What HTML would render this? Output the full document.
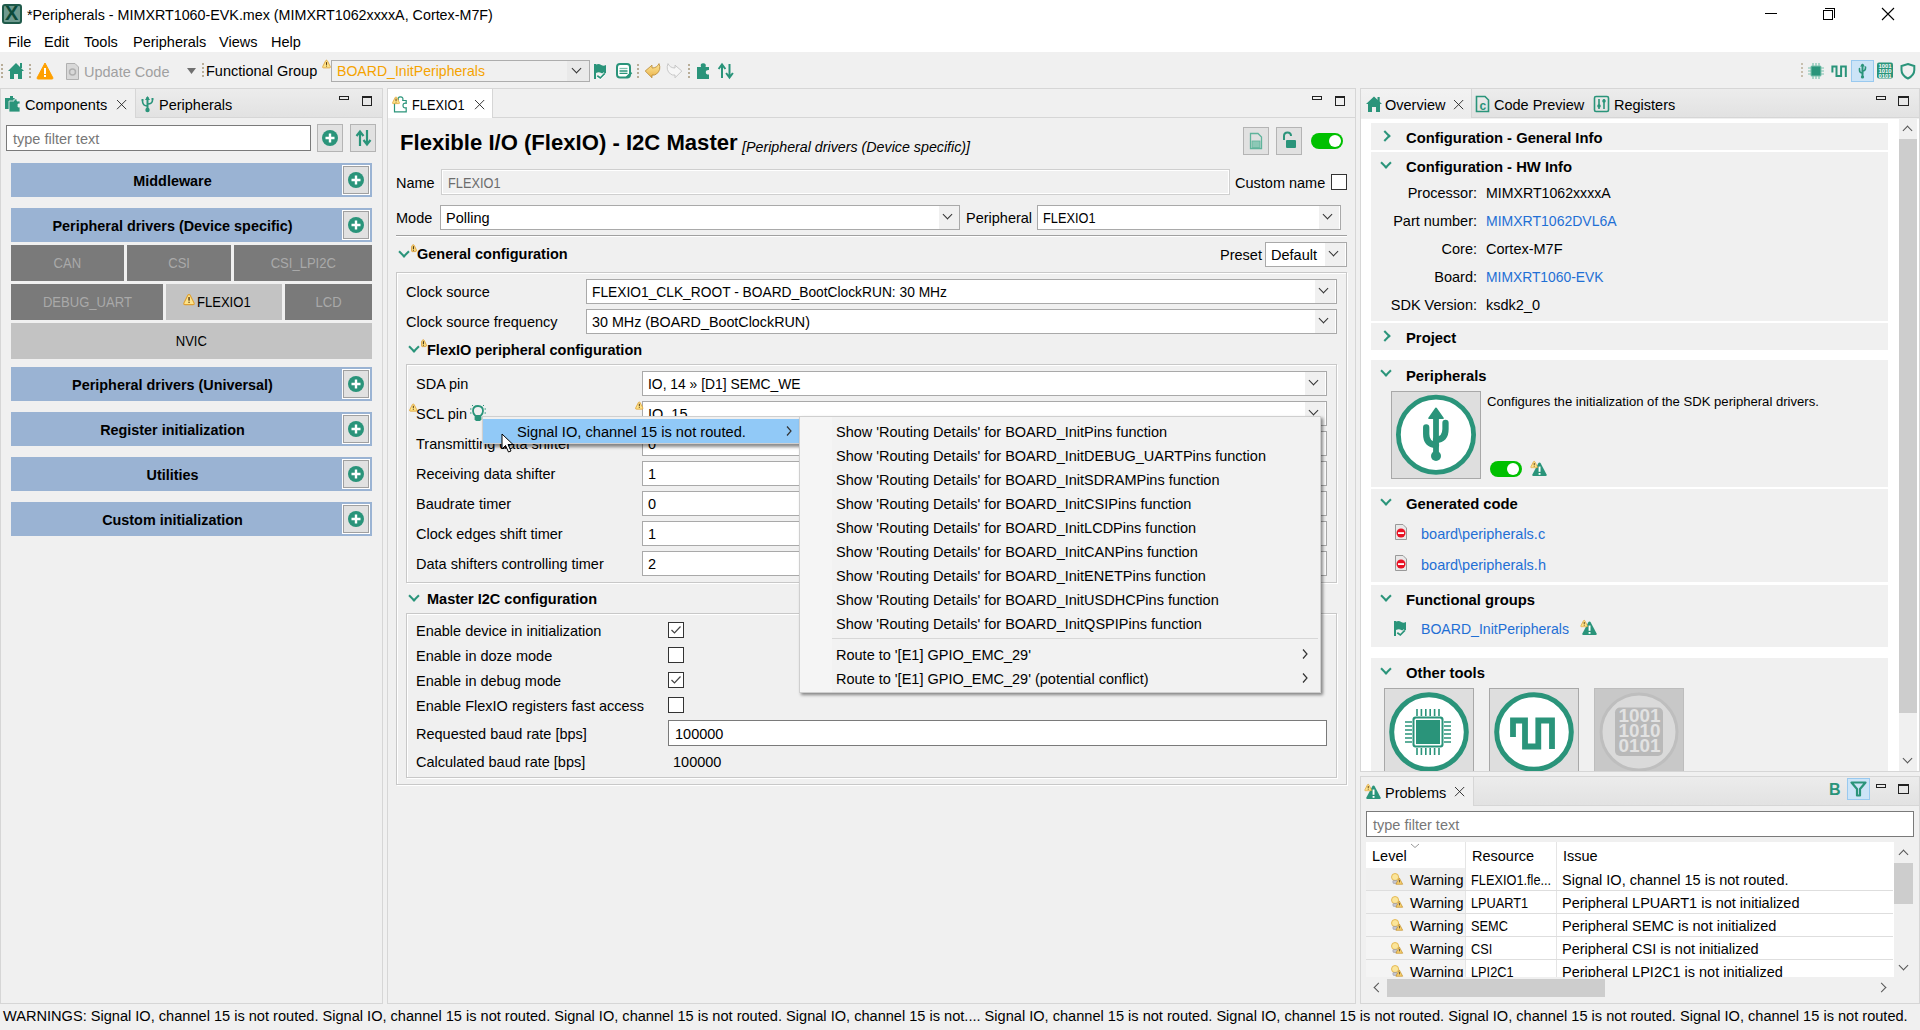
<!DOCTYPE html>
<html><head><meta charset="utf-8">
<style>
*{margin:0;padding:0;box-sizing:border-box}
html,body{width:1920px;height:1030px;overflow:hidden;background:#f0f0f0;font-family:"Liberation Sans",sans-serif;color:#000}
.a{position:absolute}
.t{position:absolute;white-space:nowrap;font-size:14.5px;line-height:15px}
.b{font-weight:bold}
.cx{transform:scaleX(.88);transform-origin:0 50%}
.tile span{display:inline-block;transform:scaleX(.9)}
.box{position:absolute;border:1px solid #a0a0a0;background:#fff}
.grp{position:absolute;border:1px solid #c8c8c8;box-shadow:inset 1px 1px 0 #fff,1px 1px 0 #fff}
.bar{position:absolute;background:#9ab3d3}
.plus{position:absolute;width:29px;height:30px;border:1px solid #a8a8a8;box-shadow:inset 0 0 0 1px #fff, 0 0 0 1px #fff;background:#e1e1e1}
.plus:after{content:"";position:absolute;left:5px;top:6px;width:17px;height:17px;border-radius:50%;background:#2a947a}
.plus i{position:absolute;z-index:2;background:#fff}
.tile{position:absolute;background:#7a7a7a;color:#a9a9a9;font-size:14.5px;text-align:center;line-height:36px;white-space:nowrap}
.tile.on{background:#c3c3c3;color:#000}
.cb{position:absolute;width:16px;height:16px;border:1px solid #333;background:#fff}
.dd{position:absolute;width:20px;background:#f0f0f0}
.chev{position:absolute;width:8px;height:8px;border-right:2px solid #444;border-bottom:2px solid #444;transform:rotate(45deg)}
.gchev{position:absolute;width:8px;height:8px;border-right:2.5px solid #2a947a;border-bottom:2.5px solid #2a947a;transform:rotate(45deg)}
.rchev{position:absolute;width:8px;height:8px;border-right:2.5px solid #2a947a;border-bottom:2.5px solid #2a947a;transform:rotate(-45deg)}
.lnk{color:#1f6fd5}
.sec{position:absolute;left:1371px;width:517px;background:#f0f0f0}
</style></head><body>

<!-- title bar -->
<div class="a" style="left:0;top:0;width:1920px;height:52px;background:#fff"></div>
<div class="a" style="left:2px;top:4px;width:20px;height:20px;background:#6f9a8f;border:2px solid #1f5a4a;border-radius:3px"></div>
<div class="t b" style="left:5px;top:3px;font-size:20px;line-height:20px;color:#0d4a3a">X</div>
<div class="t" style="left:27px;top:8px;font-size:14.3px">*Peripherals - MIMXRT1060-EVK.mex (MIMXRT1062xxxxA, Cortex-M7F)</div>
<div class="a" style="left:1765px;top:13px;width:12px;height:1px;background:#000"></div>
<div class="a" style="left:1823px;top:10px;width:10px;height:10px;border:1px solid #000"></div>
<div class="a" style="left:1825px;top:8px;width:10px;height:10px;border-top:1px solid #000;border-right:1px solid #000"></div>
<svg class="a" style="left:1881px;top:7px" width="14" height="14"><path d="M1 1L13 13M13 1L1 13" stroke="#000" stroke-width="1.1"/></svg>

<!-- menu -->
<div class="t" style="left:8px;top:35px">File</div>
<div class="t" style="left:44px;top:35px">Edit</div>
<div class="t" style="left:84px;top:35px">Tools</div>
<div class="t" style="left:133px;top:35px">Peripherals</div>
<div class="t" style="left:219px;top:35px">Views</div>
<div class="t" style="left:271px;top:35px">Help</div>

<!-- status bar -->
<div class="t" style="left:3px;top:1009px;font-size:14.59px">WARNINGS: Signal IO, channel 15 is not routed. Signal IO, channel 15 is not routed. Signal IO, channel 15 is not routed. Signal IO, channel 15 is not.... Signal IO, channel 15 is not routed. Signal IO, channel 15 is not routed. Signal IO, channel 15 is not routed. Signal IO, channel 15 is not routed.</div>

<!-- panel frames -->
<div class="a" style="left:0;top:88px;width:383px;height:916px;border:1px solid #d6d6d6"></div>
<div class="a" style="left:387px;top:88px;width:969px;height:916px;border:1px solid #d6d6d6"></div>
<div class="a" style="left:1360px;top:88px;width:560px;height:684px;border:1px solid #d6d6d6"></div>
<div class="a" style="left:1360px;top:776px;width:560px;height:228px;border:1px solid #d6d6d6"></div>


<!-- toolbar -->
<svg class="a" style="left:0;top:60px" width="740" height="24">
 <g fill="#b8ad98"><rect x="1" y="4" width="2" height="2"/><rect x="1" y="8" width="2" height="2"/><rect x="1" y="12" width="2" height="2"/><rect x="1" y="16" width="2" height="2"/>
 <rect x="29" y="4" width="2" height="2"/><rect x="29" y="8" width="2" height="2"/><rect x="29" y="12" width="2" height="2"/><rect x="29" y="16" width="2" height="2"/>
 <rect x="202" y="3" width="2" height="2"/><rect x="202" y="7" width="2" height="2"/><rect x="202" y="11" width="2" height="2"/><rect x="202" y="15" width="2" height="2"/>
 <rect x="637" y="4" width="2" height="2"/><rect x="637" y="8" width="2" height="2"/><rect x="637" y="12" width="2" height="2"/><rect x="637" y="16" width="2" height="2"/>
 <rect x="688" y="4" width="2" height="2"/><rect x="688" y="8" width="2" height="2"/><rect x="688" y="12" width="2" height="2"/><rect x="688" y="16" width="2" height="2"/>
 </g>
 <!-- home -->
 <path d="M8 11 L16 3 L24 11 L22 11 L22 19 L18 19 L18 14 L14 14 L14 19 L10 19 L10 11 Z" fill="#2a947a"/><rect x="20" y="3" width="2" height="5" fill="#2a947a"/>
 <!-- warning -->
 <path d="M45 3 L53 18 Q53 19 52 19 L38 19 Q37 19 37 18 Z" fill="#ffa000" stroke="#ffa000" stroke-width="1" stroke-linejoin="round"/>
 <rect x="44" y="8" width="2" height="6" fill="#fff"/><rect x="44" y="15" width="2" height="2" fill="#fff"/>
 <!-- update code doc -->
 <path d="M66.5 3.5 L75 3.5 L78.5 7 L78.5 19.5 L66.5 19.5 Z" fill="#d8d8d8" stroke="#b0b0b0"/>
 <circle cx="72.5" cy="12" r="3" fill="none" stroke="#b0b0b0" stroke-width="1.5"/>
 <path d="M187 8 L196 8 L191.5 14 Z" fill="#707070"/>
 <!-- flag -->
 <rect x="594" y="4" width="2" height="15" fill="#2a947a"/>
 <path d="M596 4.5 Q599 3.3 601.2 5 Q603.5 6.5 606 5 L606 13 Q603.5 14.5 601.2 13 Q599 11.5 596 13 Z" fill="#2a947a"/>
 <path d="M597.3 15.8 L600.3 18 L604.8 13.4" fill="none" stroke="#fff" stroke-width="3.2"/>
 <path d="M597.3 15.8 L600.3 18 L604.8 13.4" fill="none" stroke="#2a947a" stroke-width="1.7"/>
 <!-- msg -->
 <rect x="617" y="4" width="13" height="13.5" rx="3" fill="#fff" stroke="#2a947a" stroke-width="2"/>
 <path d="M619.5 8.5h8" stroke="#7cc2ae" stroke-width="1.3"/><path d="M619.5 11h8M619.5 13.4h8" stroke="#2a947a" stroke-width="1.3"/>
 <path d="M626.5 17.5 L631.5 12.5" stroke="#2a947a" stroke-width="2.2"/>
 <!-- undo -->
 <defs><linearGradient id="ug" x1="0" y1="0" x2="0" y2="1"><stop offset="0" stop-color="#fde79a"/><stop offset="1" stop-color="#eab24a"/></linearGradient></defs>
 <path d="M645.2 11 L652 5.2 L652 8 Q657 8 659 3.6 Q661.5 10 656.5 14 Q654.5 15.5 652 15 L652 17.8 Z" fill="url(#ug)" stroke="#b8862e" stroke-width="0.8" stroke-linejoin="round"/>
 <!-- redo -->
 <path d="M681.8 11 L675 5.2 L675 8 Q670 8 668 3.6 Q665.5 10 670.5 14 Q672.5 15.5 675 15 L675 17.8 Z" fill="#f6f6f6" stroke="#bdbdbd" stroke-width="0.8" stroke-linejoin="round"/>
 <!-- puzzle -->
 <path d="M697 7 L701 7 Q699.8 3.3 703.2 3.3 Q706.6 3.3 705.6 7 L709 7 L709 10 Q705.8 9.8 705.8 12.3 Q705.8 14.8 709 14.6 L709 19 L697 19 Z" fill="#2a947a"/>
 <!-- sort -->
 <path d="M722 18 L722 5.5 M718.6 9 L722 4.5 L725.4 9" fill="none" stroke="#2a947a" stroke-width="2"/>
 <path d="M729.5 4 L729.5 16.5 M726.1 13 L729.5 17.5 L732.9 13" fill="none" stroke="#2a947a" stroke-width="2"/>
</svg>
<div class="t" style="left:84px;top:65px;color:#a0a0a0">Update Code</div>
<div class="t" style="left:206px;top:64px">Functional Group</div>
<svg class="a" style="left:322px;top:59px" width="9" height="10" viewBox="0 0 12 12.5"><path d="M6 1.2 Q6.8 1.2 7.3 2.2 L11 9.6 Q11.7 11.4 10 11.4 L2 11.4 Q0.3 11.4 1 9.6 L4.7 2.2 Q5.2 1.2 6 1.2 Z" fill="#fde38a" stroke="#e0a030" stroke-width="1.1"/><rect x="5.4" y="3.8" width="1.3" height="3.6" fill="#4a2a08"/><rect x="5.4" y="8.4" width="1.3" height="1.3" fill="#6a4a18"/></svg>
<div class="a" style="left:331px;top:60px;width:259px;height:22px;border:1px solid #adadad;background:#f0f0f0"></div>
<div class="a" style="left:567px;top:61px;width:22px;height:20px;background:#e9e9e9"></div>
<div class="chev" style="left:573px;top:65px;width:7px;height:7px;border-width:1.8px;border-color:#333"></div>
<div class="t" style="left:337px;top:64px;color:#f5a300;transform:scaleX(.972);transform-origin:0 50%">BOARD_InitPeripherals</div>

<svg class="a" style="left:1800px;top:59px" width="120" height="26">
 <g fill="#c8bfae"><rect x="1" y="4" width="2" height="2"/><rect x="1" y="8" width="2" height="2"/><rect x="1" y="12" width="2" height="2"/><rect x="1" y="16" width="2" height="2"/></g>
 <!-- chip -->
 <g stroke="#7cc2ae" stroke-width="1.2"><path d="M13 4v3M16 4v3M19 4v3M13 17v3M16 17v3M19 17v3M8 9h3M8 12h3M8 15h3M21 9h3M21 12h3M21 15h3"/></g>
 <rect x="10.5" y="6.5" width="11" height="11" rx="1.5" fill="#7cc2ae"/><rect x="11.5" y="7.5" width="9" height="9" fill="#2a947a"/>
 <!-- wave -->
 <path d="M32.4 13.5 L32.4 7.6 L36.5 7.6 L36.5 16.9 L41.1 16.9 L41.1 7.6 L45.8 7.6 L45.8 17.9" fill="none" stroke="#2a947a" stroke-width="2"/>
 <!-- usb highlighted -->
 <rect x="51.5" y="1.5" width="22" height="21" fill="#cce4f7" stroke="#99c9ef"/>
 <path d="M62.5 5 L62.5 18" stroke="#2a947a" stroke-width="2"/><path d="M60 7.5 L62.5 4.5 L65 7.5 Z" fill="#2a947a"/>
 <path d="M62.5 14 Q59.5 14 59.5 11 L59.5 9.5" fill="none" stroke="#2a947a" stroke-width="1.6" stroke-linecap="round"/><path d="M62.5 12 Q65.5 12 65.5 9 L65.5 8" fill="none" stroke="#2a947a" stroke-width="1.6" stroke-linecap="round"/>
 <circle cx="62.5" cy="18" r="1.6" fill="#2a947a"/>
 <!-- binary -->
 <rect x="77" y="3.5" width="16" height="16" rx="2" fill="#2a947a"/>
 <g font-size="6.2" font-family="Liberation Sans" font-weight="bold" fill="#fff">
 <text x="78.5" y="8.6" textLength="13" lengthAdjust="spacingAndGlyphs">1001</text>
 <text x="78.5" y="13.6" textLength="13" lengthAdjust="spacingAndGlyphs">1010</text>
 <text x="78.5" y="18.6" textLength="13" lengthAdjust="spacingAndGlyphs">0101</text></g>
 <!-- shield -->
 <path d="M107.9 5 L114.3 7 L114.3 11 Q114.3 16.5 107.9 19.5 Q101.5 16.5 101.5 11 L101.5 7 Z" fill="none" stroke="#2a947a" stroke-width="2"/>
</svg>


<!-- LEFT PANEL -->
<div class="a" style="left:1px;top:89px;width:381px;height:29px;background:linear-gradient(#ececec,#e2e2e2);border-bottom:1px solid #d6d6d6"></div>
<div class="a" style="left:1px;top:89px;width:135px;height:29px;background:#f0f0f0;border-right:1px solid #d6d6d6"></div>
<svg class="a" style="left:4px;top:95px" width="18" height="18">
 <path d="M1 3 L6 3 L6 1 L9 1 L9 3 L11 3 L11 14 L1 14 Z" fill="#2a947a"/>
 <path d="M5 6 L10 6 L10 4 L13 4 L13 6 L16 6 L16 9 L14 9 L14 12 L16 12 L16 17 L5 17 Z" fill="#2a947a" stroke="#f0f0f0" stroke-width="0.8"/>
</svg>
<div class="t" style="left:25px;top:98px">Components</div>
<svg class="a" style="left:116px;top:99px" width="12" height="12"><path d="M1 1L10.2 10.2M10.2 1L1 10.2" stroke="#222" stroke-width="0.9"/></svg>
<svg class="a" style="left:140px;top:95px" width="16" height="18">
 <path d="M7.5 2 L7.5 14" stroke="#2a947a" stroke-width="2"/><path d="M5 5 L7.5 1 L10 5 Z" fill="#2a947a"/>
 <path d="M7.5 11 Q2.5 11 2.5 6" fill="none" stroke="#2a947a" stroke-width="1.6"/><path d="M7.5 9 Q12.5 9 12.5 5" fill="none" stroke="#2a947a" stroke-width="1.6"/>
 <rect x="1.5" y="4" width="2" height="2" fill="#2a947a"/><rect x="11.5" y="3" width="2" height="2" fill="#2a947a"/>
 <circle cx="7.5" cy="15" r="2.2" fill="#2a947a"/>
</svg>
<div class="t" style="left:159px;top:98px">Peripherals</div>
<div class="a" style="left:339px;top:96px;width:10px;height:4px;border:1.3px solid #222"></div>
<div class="a" style="left:362px;top:96px;width:10px;height:10px;border:1px solid #222;border-top-width:2px"></div>

<div class="a" style="left:6px;top:125px;width:305px;height:26px;border:1px solid #7a7a7a;background:#fff"></div>
<div class="t" style="left:13px;top:132px;color:#777">type filter text</div>
<div class="a" style="left:317px;top:124px;width:26px;height:28px;border:1px solid #b4b4b4;background:#e1e1e1"></div>
<svg class="a" style="left:321px;top:129px" width="18" height="18"><circle cx="9" cy="9" r="8" fill="#2a947a"/><path d="M9 4.5v9M4.5 9h9" stroke="#fff" stroke-width="2.4"/></svg>
<div class="a" style="left:350px;top:124px;width:26px;height:28px;border:1px solid #b4b4b4;background:#e1e1e1"></div>
<svg class="a" style="left:355px;top:129px" width="18" height="18">
 <path d="M5 17 L5 3 M1.5 7 L5 2.5 L8.5 7" fill="none" stroke="#2a947a" stroke-width="2.2"/>
 <path d="M12 1 L12 15 M8.5 11 L12 15.5 L15.5 11" fill="none" stroke="#2a947a" stroke-width="2.2"/>
</svg>
<div class="bar" style="left:11px;top:163px;width:361px;height:34px"></div>
<div class="t b" style="left:11px;top:174px;width:323px;text-align:center;font-size:14.4px">Middleware</div>
<div class="a" style="left:343px;top:166px;width:26px;height:28px;background:#e1e1e1;border:1px solid #a0a0a0;box-shadow:0 0 0 1px #fff"></div>
<svg class="a" style="left:347px;top:171px" width="18" height="18"><circle cx="9" cy="9" r="8" fill="#2a947a"/><path d="M9 4.5v9M4.5 9h9" stroke="#fff" stroke-width="2.4"/></svg>
<div class="bar" style="left:11px;top:208px;width:361px;height:34px"></div>
<div class="t b" style="left:11px;top:219px;width:323px;text-align:center;font-size:14.4px">Peripheral drivers (Device specific)</div>
<div class="a" style="left:343px;top:211px;width:26px;height:28px;background:#e1e1e1;border:1px solid #a0a0a0;box-shadow:0 0 0 1px #fff"></div>
<svg class="a" style="left:347px;top:216px" width="18" height="18"><circle cx="9" cy="9" r="8" fill="#2a947a"/><path d="M9 4.5v9M4.5 9h9" stroke="#fff" stroke-width="2.4"/></svg>
<div class="bar" style="left:11px;top:367px;width:361px;height:34px"></div>
<div class="t b" style="left:11px;top:378px;width:323px;text-align:center;font-size:14.4px">Peripheral drivers (Universal)</div>
<div class="a" style="left:343px;top:370px;width:26px;height:28px;background:#e1e1e1;border:1px solid #a0a0a0;box-shadow:0 0 0 1px #fff"></div>
<svg class="a" style="left:347px;top:375px" width="18" height="18"><circle cx="9" cy="9" r="8" fill="#2a947a"/><path d="M9 4.5v9M4.5 9h9" stroke="#fff" stroke-width="2.4"/></svg>
<div class="bar" style="left:11px;top:412px;width:361px;height:34px"></div>
<div class="t b" style="left:11px;top:423px;width:323px;text-align:center;font-size:14.4px">Register initialization</div>
<div class="a" style="left:343px;top:415px;width:26px;height:28px;background:#e1e1e1;border:1px solid #a0a0a0;box-shadow:0 0 0 1px #fff"></div>
<svg class="a" style="left:347px;top:420px" width="18" height="18"><circle cx="9" cy="9" r="8" fill="#2a947a"/><path d="M9 4.5v9M4.5 9h9" stroke="#fff" stroke-width="2.4"/></svg>
<div class="bar" style="left:11px;top:457px;width:361px;height:34px"></div>
<div class="t b" style="left:11px;top:468px;width:323px;text-align:center;font-size:14.4px">Utilities</div>
<div class="a" style="left:343px;top:460px;width:26px;height:28px;background:#e1e1e1;border:1px solid #a0a0a0;box-shadow:0 0 0 1px #fff"></div>
<svg class="a" style="left:347px;top:465px" width="18" height="18"><circle cx="9" cy="9" r="8" fill="#2a947a"/><path d="M9 4.5v9M4.5 9h9" stroke="#fff" stroke-width="2.4"/></svg>
<div class="bar" style="left:11px;top:502px;width:361px;height:34px"></div>
<div class="t b" style="left:11px;top:513px;width:323px;text-align:center;font-size:14.4px">Custom initialization</div>
<div class="a" style="left:343px;top:505px;width:26px;height:28px;background:#e1e1e1;border:1px solid #a0a0a0;box-shadow:0 0 0 1px #fff"></div>
<svg class="a" style="left:347px;top:510px" width="18" height="18"><circle cx="9" cy="9" r="8" fill="#2a947a"/><path d="M9 4.5v9M4.5 9h9" stroke="#fff" stroke-width="2.4"/></svg>
<div class="tile" style="left:11px;top:245px;width:113px;height:36px"><span>CAN</span></div>
<div class="tile" style="left:127px;top:245px;width:104px;height:36px"><span>CSI</span></div>
<div class="tile" style="left:234px;top:245px;width:138px;height:36px"><span>CSI_LPI2C</span></div>
<div class="tile" style="left:11px;top:284px;width:152px;height:36px"><span>DEBUG_UART</span></div>
<div class="tile on" style="left:166px;top:284px;width:116px;height:36px"><span>FLEXIO1</span></div>
<div class="tile" style="left:285px;top:284px;width:87px;height:36px"><span>LCD</span></div>
<div class="tile on" style="left:11px;top:323px;width:361px;height:36px"><span>NVIC</span></div>
<svg class="a" style="left:183px;top:293px" width="12" height="13" viewBox="0 0 12 12.5"><path d="M6 1.2 Q6.8 1.2 7.3 2.2 L11 9.6 Q11.7 11.4 10 11.4 L2 11.4 Q0.3 11.4 1 9.6 L4.7 2.2 Q5.2 1.2 6 1.2 Z" fill="#fde38a" stroke="#e0a030" stroke-width="1.1"/><rect x="5.4" y="3.8" width="1.3" height="3.6" fill="#4a2a08"/><rect x="5.4" y="8.4" width="1.3" height="1.3" fill="#6a4a18"/></svg>


<!-- CENTER PANEL -->
<div class="a" style="left:388px;top:89px;width:967px;height:29px;background:#f0f0f0;border-bottom:1px solid #d6d6d6"></div>
<div class="a" style="left:388px;top:89px;width:105px;height:29px;background:#fff;border-right:1px solid #d6d6d6"></div>
<svg class="a" style="left:392px;top:95px" width="18" height="18">
 <path d="M2.5 7 L2.5 16.8 L14.2 16.8 L14.2 12.8 Q11 13.5 11 10.5 Q11 7.8 14.2 8.3 L14.2 5.5 L10.8 5.5 Q11.6 1.8 8.4 1.8 Q5.5 1.8 6.3 5.5" fill="none" stroke="#2a947a" stroke-width="1.2"/>
 <svg x="0" y="1" width="8" height="8.5" viewBox="0 0 12 12.5"><path d="M6 1.2 Q6.8 1.2 7.3 2.2 L11 9.6 Q11.7 11.4 10 11.4 L2 11.4 Q0.3 11.4 1 9.6 L4.7 2.2 Q5.2 1.2 6 1.2 Z" fill="#fde38a" stroke="#e0a030" stroke-width="1.1"/><rect x="5.4" y="3.8" width="1.3" height="3.6" fill="#4a2a08"/><rect x="5.4" y="8.4" width="1.3" height="1.3" fill="#6a4a18"/></svg>
</svg>
<div class="t cx" style="left:412px;top:98px">FLEXIO1</div>
<svg class="a" style="left:474px;top:99px" width="12" height="12"><path d="M1 1L10.2 10.2M10.2 1L1 10.2" stroke="#222" stroke-width="0.9"/></svg>
<div class="a" style="left:1312px;top:96px;width:10px;height:4px;border:1.3px solid #222"></div>
<div class="a" style="left:1335px;top:96px;width:10px;height:10px;border:1px solid #222;border-top-width:2px"></div>

<div class="t b" style="left:400px;top:131px;font-size:22.1px;line-height:24px">Flexible I/O (FlexIO) - I2C Master</div>
<div class="t" style="left:742px;top:140px;font-size:14.25px;font-style:italic">[Peripheral drivers (Device specific)]</div>

<div class="a" style="left:1243px;top:127px;width:26px;height:28px;border:1px solid #b4b4b4;background:#e1e1e1"></div>
<svg class="a" style="left:1248px;top:131px" width="16" height="20"><path d="M2.5 2.5 L10 2.5 L13.5 6 L13.5 17.5 L2.5 17.5 Z" fill="none" stroke="#5fb39b" stroke-width="1.3"/><rect x="4" y="10" width="8" height="6.5" fill="#8cc8b6" stroke="#5fb39b" stroke-width="0.8"/></svg>
<div class="a" style="left:1276px;top:127px;width:26px;height:28px;border:1px solid #b4b4b4;background:#e1e1e1"></div>
<svg class="a" style="left:1280px;top:131px" width="18" height="20"><path d="M4 9 L4 5 Q4 1.5 7.5 1.5 Q11 1.5 11 5" fill="none" stroke="#2a947a" stroke-width="2"/><rect x="6" y="9" width="10" height="8" rx="1" fill="#2a947a"/></svg>
<div class="a" style="left:1311px;top:133px;width:32px;height:16px;border-radius:8px;background:#00c000"></div>
<div class="a" style="left:1329px;top:135px;width:12px;height:12px;border-radius:50%;background:#fff"></div>

<div class="t" style="left:396px;top:176px">Name</div>
<div class="a" style="left:441px;top:169px;width:789px;height:26px;border:1px solid #cfcfcf;background:#f0f0f0;box-shadow:inset 0 0 0 1px #fff"></div>
<div class="t cx" style="left:448px;top:176px;color:#6d6d6d">FLEXIO1</div>
<div class="t" style="left:1235px;top:176px">Custom name</div>
<div class="cb" style="left:1331px;top:174px"></div>

<div class="t" style="left:396px;top:211px">Mode</div>
<div class="a" style="left:440px;top:205px;width:520px;height:25px;border:1px solid #a9a9a9;background:#fff"></div>
<div class="dd" style="left:939px;top:206px;height:23px"></div>
<div class="chev" style="left:944px;top:211px;width:7px;height:7px;border-width:1.8px;border-color:#333"></div>
<div class="t" style="left:446px;top:211px">Polling</div>
<div class="t" style="left:966px;top:211px">Peripheral</div>
<div class="a" style="left:1037px;top:205px;width:304px;height:25px;border:1px solid #a9a9a9;background:#fff"></div>
<div class="dd" style="left:1319px;top:206px;height:23px"></div>
<div class="chev" style="left:1324px;top:211px;width:7px;height:7px;border-width:1.8px;border-color:#333"></div>
<div class="t cx" style="left:1043px;top:211px">FLEXIO1</div>
<div class="a" style="left:396px;top:235px;width:951px;height:2px;border-top:1px solid #a0a0a0;border-bottom:1px solid #fff"></div>

<!-- general configuration -->
<div class="gchev" style="left:400px;top:248px"></div>
<svg class="a" style="left:411px;top:244px" width="8" height="9"><path d="M1.5 1.2 Q2.3 0.3 3.1 1.2 Q4 2.8 5.3 5.8 Q5.8 7.6 4.3 7.6 L1.3 7.6 Q0.6 7.6 0.6 6.8 L0.6 2.5 Q0.7 1.7 1.5 1.2 Z" fill="#fbdc80" stroke="#d9952a" stroke-width="0.8"/><rect x="1.9" y="2.2" width="1" height="2.8" fill="#3a2a10"/><rect x="1.9" y="5.7" width="1" height="1" fill="#3a2a10"/></svg>
<div class="t b" style="left:417px;top:247px">General configuration</div>
<div class="t" style="left:1220px;top:248px">Preset</div>
<div class="a" style="left:1265px;top:242px;width:82px;height:25px;border:1px solid #a9a9a9;background:#fff"></div>
<div class="dd" style="left:1325px;top:243px;height:23px"></div>
<div class="chev" style="left:1330px;top:248px;width:7px;height:7px;border-width:1.8px;border-color:#333"></div>
<div class="t" style="left:1271px;top:248px">Default</div>

<div class="grp" style="left:396px;top:272px;width:951px;height:513px"></div>
<div class="t" style="left:406px;top:285px">Clock source</div>
<div class="a" style="left:586px;top:279px;width:751px;height:25px;border:1px solid #a9a9a9;background:#fff"></div>
<div class="dd" style="left:1315px;top:280px;height:23px"></div>
<div class="chev" style="left:1320px;top:285px;width:7px;height:7px;border-width:1.8px;border-color:#333"></div>
<div class="t" style="left:592px;top:285px;transform:scaleX(.95);transform-origin:0 50%">FLEXIO1_CLK_ROOT - BOARD_BootClockRUN: 30 MHz</div>
<div class="t" style="left:406px;top:315px">Clock source frequency</div>
<div class="a" style="left:586px;top:309px;width:751px;height:25px;border:1px solid #a9a9a9;background:#fff"></div>
<div class="dd" style="left:1315px;top:310px;height:23px"></div>
<div class="chev" style="left:1320px;top:315px;width:7px;height:7px;border-width:1.8px;border-color:#333"></div>
<div class="t" style="left:592px;top:315px;transform:scaleX(.987);transform-origin:0 50%">30 MHz (BOARD_BootClockRUN)</div>

<div class="gchev" style="left:410px;top:343px"></div>
<svg class="a" style="left:421px;top:339px" width="8" height="9"><path d="M1.5 1.2 Q2.3 0.3 3.1 1.2 Q4 2.8 5.3 5.8 Q5.8 7.6 4.3 7.6 L1.3 7.6 Q0.6 7.6 0.6 6.8 L0.6 2.5 Q0.7 1.7 1.5 1.2 Z" fill="#fbdc80" stroke="#d9952a" stroke-width="0.8"/><rect x="1.9" y="2.2" width="1" height="2.8" fill="#3a2a10"/><rect x="1.9" y="5.7" width="1" height="1" fill="#3a2a10"/></svg>
<div class="t b" style="left:427px;top:343px">FlexIO peripheral configuration</div>
<div class="grp" style="left:406px;top:364px;width:931px;height:219px"></div>
<div class="t" style="left:416px;top:377px">SDA pin</div>
<div class="a" style="left:642px;top:371px;width:685px;height:25px;border:1px solid #a9a9a9;background:#fff"></div>
<div class="dd" style="left:1305px;top:372px;height:23px"></div><div class="chev" style="left:1310px;top:377px;width:7px;height:7px;border-width:1.8px;border-color:#333"></div>
<div class="t" style="left:648px;top:377px;transform:scaleX(.956);transform-origin:0 50%">IO, 14 » [D1] SEMC_WE</div>
<div class="t" style="left:416px;top:407px">SCL pin</div>
<div class="a" style="left:642px;top:401px;width:685px;height:25px;border:1px solid #a9a9a9;background:#fff"></div>
<div class="dd" style="left:1305px;top:402px;height:23px"></div><div class="chev" style="left:1310px;top:407px;width:7px;height:7px;border-width:1.8px;border-color:#333"></div>
<div class="t" style="left:648px;top:407px">IO, 15</div>
<div class="t" style="left:416px;top:437px">Transmitting data shifter</div>
<div class="a" style="left:642px;top:431px;width:685px;height:25px;border:1px solid #a9a9a9;background:#fff"></div>
<div class="t" style="left:648px;top:437px">0</div>
<div class="t" style="left:416px;top:467px">Receiving data shifter</div>
<div class="a" style="left:642px;top:461px;width:685px;height:25px;border:1px solid #a9a9a9;background:#fff"></div>
<div class="t" style="left:648px;top:467px">1</div>
<div class="t" style="left:416px;top:497px">Baudrate timer</div>
<div class="a" style="left:642px;top:491px;width:685px;height:25px;border:1px solid #a9a9a9;background:#fff"></div>
<div class="t" style="left:648px;top:497px">0</div>
<div class="t" style="left:416px;top:527px">Clock edges shift timer</div>
<div class="a" style="left:642px;top:521px;width:685px;height:25px;border:1px solid #a9a9a9;background:#fff"></div>
<div class="t" style="left:648px;top:527px">1</div>
<div class="t" style="left:416px;top:557px">Data shifters controlling timer</div>
<div class="a" style="left:642px;top:551px;width:685px;height:25px;border:1px solid #a9a9a9;background:#fff"></div>
<div class="t" style="left:648px;top:557px">2</div>

<svg class="a" style="left:409px;top:403px" width="8.5" height="9" viewBox="0 0 12 12.5"><path d="M6 1.2 Q6.8 1.2 7.3 2.2 L11 9.6 Q11.7 11.4 10 11.4 L2 11.4 Q0.3 11.4 1 9.6 L4.7 2.2 Q5.2 1.2 6 1.2 Z" fill="#fde38a" stroke="#e0a030" stroke-width="1.1"/><rect x="5.4" y="3.8" width="1.3" height="3.6" fill="#4a2a08"/><rect x="5.4" y="8.4" width="1.3" height="1.3" fill="#6a4a18"/></svg>
<svg class="a" style="left:635px;top:401px" width="8.5" height="9" viewBox="0 0 12 12.5"><path d="M6 1.2 Q6.8 1.2 7.3 2.2 L11 9.6 Q11.7 11.4 10 11.4 L2 11.4 Q0.3 11.4 1 9.6 L4.7 2.2 Q5.2 1.2 6 1.2 Z" fill="#fde38a" stroke="#e0a030" stroke-width="1.1"/><rect x="5.4" y="3.8" width="1.3" height="3.6" fill="#4a2a08"/><rect x="5.4" y="8.4" width="1.3" height="1.3" fill="#6a4a18"/></svg>
<svg class="a" style="left:469px;top:404px" width="18" height="18">
 <path d="M9 2 Q4 2 4 7 Q4 10 6.5 12 L6.5 15 L11.5 15 L11.5 12 Q14 10 14 7 Q14 2 9 2 Z" fill="none" stroke="#2a947a" stroke-width="1.8"/>
 <rect x="6.5" y="11" width="5" height="6" fill="#2a947a"/>
 <path d="M1 5h1.5M1 9h1.5M15.5 5h1.5M15.5 9h1.5M3 1l1 1M15 1l-1 1" stroke="#2a947a" stroke-width="1"/>
</svg>

<!-- master i2c -->
<div class="gchev" style="left:410px;top:592px"></div>
<div class="t b" style="left:427px;top:592px">Master I2C configuration</div>
<div class="grp" style="left:406px;top:613px;width:931px;height:165px"></div>
<div class="t" style="left:416px;top:624px">Enable device in initialization</div>
<div class="t" style="left:416px;top:649px">Enable in doze mode</div>
<div class="t" style="left:416px;top:674px">Enable in debug mode</div>
<div class="t" style="left:416px;top:699px">Enable FlexIO registers fast access</div>
<div class="cb" style="left:668px;top:622px"></div>
<svg class="a" style="left:668px;top:622px" width="16" height="16"><path d="M3.5 8 L6.5 11 L12.5 4.5" fill="none" stroke="#444" stroke-width="1.2"/></svg>
<div class="cb" style="left:668px;top:647px"></div>
<div class="cb" style="left:668px;top:672px"></div>
<svg class="a" style="left:668px;top:672px" width="16" height="16"><path d="M3.5 8 L6.5 11 L12.5 4.5" fill="none" stroke="#444" stroke-width="1.2"/></svg>
<div class="cb" style="left:668px;top:697px"></div>
<div class="t" style="left:416px;top:727px">Requested baud rate [bps]</div>
<div class="a" style="left:668px;top:720px;width:659px;height:26px;border:1px solid #7a7a7a;background:#fff"></div>
<div class="t" style="left:675px;top:727px">100000</div>
<div class="t" style="left:416px;top:755px">Calculated baud rate [bps]</div>
<div class="t" style="left:673px;top:755px">100000</div>


<!-- CONTEXT MENU -->
<div class="a" style="left:482px;top:416px;width:318px;height:28px;background:#f0f0f0;border:1px solid #cfcfcf;box-shadow:2px 3px 3px rgba(0,0,0,0.45)"></div>
<div class="a" style="left:483px;top:419px;width:316px;height:24px;background:#91c9f7"></div>
<div class="t" style="left:517px;top:425px;font-size:14.66px">Signal IO, channel 15 is not routed.</div>
<svg class="a" style="left:785px;top:425px" width="8" height="12"><path d="M2 1.5 L6 6 L2 10.5" fill="none" stroke="#333" stroke-width="1.2"/></svg>
<svg class="a" style="left:501px;top:433px" width="16" height="22"><path d="M1 1 L1 16 L4.5 12.5 L7.5 19 L10 18 L7 11.5 L12 11.5 Z" fill="#fff" stroke="#000" stroke-width="1"/></svg>

<div class="a" style="left:799px;top:416px;width:522px;height:277px;background:#f2f2f2;border:1px solid #cfcfcf;box-shadow:2px 2px 3px rgba(0,0,0,0.45)"></div>
<div class="a" style="left:800px;top:417px;width:32px;height:275px;background:#f5f5f5"></div>
<div class="t" style="left:836px;top:425px">Show 'Routing Details' for BOARD_InitPins function</div>
<div class="t" style="left:836px;top:449px">Show 'Routing Details' for BOARD_InitDEBUG_UARTPins function</div>
<div class="t" style="left:836px;top:473px">Show 'Routing Details' for BOARD_InitSDRAMPins function</div>
<div class="t" style="left:836px;top:497px">Show 'Routing Details' for BOARD_InitCSIPins function</div>
<div class="t" style="left:836px;top:521px">Show 'Routing Details' for BOARD_InitLCDPins function</div>
<div class="t" style="left:836px;top:545px">Show 'Routing Details' for BOARD_InitCANPins function</div>
<div class="t" style="left:836px;top:569px">Show 'Routing Details' for BOARD_InitENETPins function</div>
<div class="t" style="left:836px;top:593px">Show 'Routing Details' for BOARD_InitUSDHCPins function</div>
<div class="t" style="left:836px;top:617px">Show 'Routing Details' for BOARD_InitQSPIPins function</div>

<div class="a" style="left:832px;top:638px;width:486px;height:1px;background:#d7d7d7"></div>
<div class="t" style="left:836px;top:648px">Route to '[E1] GPIO_EMC_29'</div>
<div class="t" style="left:836px;top:672px">Route to '[E1] GPIO_EMC_29' (potential conflict)</div>
<svg class="a" style="left:1301px;top:648px" width="8" height="12"><path d="M2 1.5 L6 6 L2 10.5" fill="none" stroke="#333" stroke-width="1.2"/></svg>
<svg class="a" style="left:1301px;top:672px" width="8" height="12"><path d="M2 1.5 L6 6 L2 10.5" fill="none" stroke="#333" stroke-width="1.2"/></svg>


<!-- RIGHT PANEL -->
<div class="a" style="left:1361px;top:89px;width:558px;height:29px;background:linear-gradient(#ececec,#e2e2e2);border-bottom:1px solid #d6d6d6"></div>
<div class="a" style="left:1361px;top:89px;width:111px;height:29px;background:linear-gradient(#f2f2f2,#ececec);border-right:1px solid #d6d6d6"></div>
<svg class="a" style="left:1365px;top:95px" width="18" height="18"><path d="M1 9 L9 1.5 L17 9 L15 9 L15 17 L11 17 L11 12 L7 12 L7 17 L3 17 L3 9 Z" fill="#2a947a"/><rect x="12.5" y="2" width="2.2" height="5" fill="#2a947a"/></svg>
<div class="t" style="left:1385px;top:98px">Overview</div>
<svg class="a" style="left:1453px;top:99px" width="12" height="12"><path d="M1 1L10.2 10.2M10.2 1L1 10.2" stroke="#222" stroke-width="0.9"/></svg>
<svg class="a" style="left:1475px;top:95px" width="16" height="18"><path d="M1.5 1.5 L10 1.5 L13.5 5 L13.5 16.5 L1.5 16.5 Z" fill="none" stroke="#2a947a" stroke-width="1.6"/><text x="7.8" y="14.5" font-size="12" font-family="Liberation Sans" font-weight="bold" fill="#2a947a" text-anchor="middle">c</text></svg>
<div class="t" style="left:1494px;top:98px">Code Preview</div>
<svg class="a" style="left:1593px;top:95px" width="18" height="18"><rect x="1.5" y="1.5" width="14" height="15" rx="1.5" fill="none" stroke="#2a947a" stroke-width="1.6"/><path d="M6 4v10M11 4v10" stroke="#2a947a" stroke-width="1.6"/><circle cx="6" cy="11" r="1.8" fill="#2a947a"/><circle cx="11" cy="6" r="1.8" fill="#2a947a"/></svg>
<div class="t" style="left:1614px;top:98px">Registers</div>
<div class="a" style="left:1876px;top:96px;width:10px;height:4px;border:1.3px solid #222"></div>
<div class="a" style="left:1898px;top:96px;width:11px;height:10px;border:1px solid #222;border-top-width:2px"></div>

<div class="a" style="left:1361px;top:119px;width:558px;height:652px;background:#fff"></div>
<!-- scrollbar -->
<div class="a" style="left:1899px;top:119px;width:18px;height:652px;background:#f0f0f0"></div>
<div class="a" style="left:1899px;top:139px;width:18px;height:574px;background:#cdcdcd"></div>
<div class="chev" style="left:1904px;top:127px;width:7px;height:7px;border-width:1.8px;transform:rotate(225deg);border-color:#555"></div>
<div class="chev" style="left:1904px;top:755px;width:7px;height:7px;border-width:1.8px;border-color:#555"></div>

<div class="sec" style="top:123px;height:27px"></div>
<div class="rchev" style="left:1381px;top:132px"></div>
<div class="t b" style="left:1406px;top:131px;font-size:14.8px">Configuration - General Info</div>

<div class="sec" style="top:152px;height:169px"></div>
<div class="gchev" style="left:1382px;top:159px"></div>
<div class="t b" style="left:1406px;top:160px;font-size:14.8px">Configuration - HW Info</div>
<div class="t" style="left:1377px;top:186px;width:100px;text-align:right">Processor:</div>
<div class="t" style="left:1486px;top:186px;transform:scaleX(0.976);transform-origin:0 50%">MIMXRT1062xxxxA</div>
<div class="t" style="left:1377px;top:214px;width:100px;text-align:right">Part number:</div>
<div class="t lnk" style="left:1486px;top:214px;transform:scaleX(0.967);transform-origin:0 50%">MIMXRT1062DVL6A</div>
<div class="t" style="left:1377px;top:242px;width:100px;text-align:right">Core:</div>
<div class="t" style="left:1486px;top:242px">Cortex-M7F</div>
<div class="t" style="left:1377px;top:270px;width:100px;text-align:right">Board:</div>
<div class="t lnk" style="left:1486px;top:270px;transform:scaleX(0.955);transform-origin:0 50%">MIMXRT1060-EVK</div>
<div class="t" style="left:1377px;top:298px;width:100px;text-align:right">SDK Version:</div>
<div class="t" style="left:1486px;top:298px">ksdk2_0</div>

<div class="sec" style="top:323px;height:27px"></div>
<div class="rchev" style="left:1381px;top:332px"></div>
<div class="t b" style="left:1406px;top:331px;font-size:14.8px">Project</div>

<div class="sec" style="top:360px;height:127px"></div>
<div class="gchev" style="left:1382px;top:367px"></div>
<div class="t b" style="left:1406px;top:369px;font-size:14.8px">Peripherals</div>
<div class="a" style="left:1391px;top:391px;width:90px;height:88px;background:#dedede;border:1px solid #a8a8a8"></div>
<svg class="a" style="left:1394px;top:394px" width="84" height="82">
 <circle cx="42" cy="40.7" r="37.6" fill="#fff" stroke="#2a947a" stroke-width="4.8"/>
 <path d="M35 24.3 L42 14.3 L49 24.3 Z" fill="#2a947a" stroke="#2a947a" stroke-width="1.6" stroke-linejoin="round"/>
 <path d="M42 22 L42 61" stroke="#2a947a" stroke-width="5.8"/>
 <circle cx="42" cy="62" r="5" fill="#2a947a"/>
 <path d="M32.2 33.5 L32.2 40 Q32.2 50.5 42 51" fill="none" stroke="#2a947a" stroke-width="6.3" stroke-linecap="round"/>
 <path d="M51.5 28.8 L51.5 35 Q51.5 45.5 42 46" fill="none" stroke="#2a947a" stroke-width="6.3" stroke-linecap="round"/>
</svg>
<div class="t" style="left:1487px;top:394px;font-size:13.1px">Configures the initialization of the SDK peripheral drivers.</div>
<div class="a" style="left:1490px;top:461px;width:32px;height:16px;border-radius:8px;background:#00c000"></div>
<div class="a" style="left:1507px;top:463px;width:12px;height:12px;border-radius:50%;background:#fff"></div>
<svg class="a" style="left:1530px;top:460px" width="18" height="18"><path d="M9.5 2.5 Q10.3 2.5 10.8 3.4 L16.6 14.4 Q17.2 16 15.6 16 L3.4 16 Q1.8 16 2.4 14.4 L8.2 3.4 Q8.7 2.5 9.5 2.5 Z" fill="#2a947a"/><rect x="8.6" y="6.5" width="1.9" height="5.3" fill="#fff"/><rect x="8.6" y="13" width="1.9" height="1.8" fill="#fff"/><svg x="0" y="0" width="8" height="8.5" viewBox="-0.5 -0.5 12.5 12.5"><path d="M6 -0.2 L12 12 L0 12 Z" fill="#2a947a" opacity="0"/><path d="M6 1.2 Q6.8 1.2 7.3 2.2 L11 9.6 Q11.7 11.4 10 11.4 L2 11.4 Q0.3 11.4 1 9.6 L4.7 2.2 Q5.2 1.2 6 1.2 Z" fill="#fde38a" stroke="#e0a030" stroke-width="1.1"/><rect x="5.4" y="3.8" width="1.3" height="3.6" fill="#4a2a08"/><rect x="5.4" y="8.4" width="1.3" height="1.3" fill="#6a4a18"/></svg></svg>

<div class="sec" style="top:489px;height:93px"></div>
<div class="gchev" style="left:1382px;top:496px"></div>
<div class="t b" style="left:1406px;top:497px;font-size:14.8px">Generated code</div>
<svg class="a" style="left:1394px;top:524px" width="14" height="16"><path d="M1.5 0.5 L9 0.5 L12.5 4 L12.5 15.5 L1.5 15.5 Z" fill="#e8e8e8" stroke="#999"/><circle cx="7" cy="9" r="4.5" fill="#e81123"/><rect x="4" y="8.2" width="6" height="1.8" fill="#fff"/></svg>
<div class="t lnk" style="left:1421px;top:527px">board\peripherals.c</div>
<svg class="a" style="left:1394px;top:555px" width="14" height="16"><path d="M1.5 0.5 L9 0.5 L12.5 4 L12.5 15.5 L1.5 15.5 Z" fill="#e8e8e8" stroke="#999"/><circle cx="7" cy="9" r="4.5" fill="#e81123"/><rect x="4" y="8.2" width="6" height="1.8" fill="#fff"/></svg>
<div class="t lnk" style="left:1421px;top:558px">board\peripherals.h</div>

<div class="sec" style="top:585px;height:62px"></div>
<div class="gchev" style="left:1382px;top:592px"></div>
<div class="t b" style="left:1406px;top:593px;font-size:14.8px">Functional groups</div>
<svg class="a" style="left:1393px;top:620px" width="14" height="17"><rect x="1" y="1" width="2" height="15" fill="#2a947a"/><path d="M3 1.5 Q6 0.3 8.2 2 Q10.5 3.5 13 2 L13 10 Q10.5 11.5 8.2 10 Q6 8.5 3 10 Z" fill="#2a947a"/><path d="M4.3 12.8 L7.3 15 L11.8 10.4" fill="none" stroke="#f0f0f0" stroke-width="3.2"/><path d="M4.3 12.8 L7.3 15 L11.8 10.4" fill="none" stroke="#2a947a" stroke-width="1.7"/></svg>
<div class="t lnk" style="left:1421px;top:622px;transform:scaleX(.972);transform-origin:0 50%">BOARD_InitPeripherals</div>
<svg class="a" style="left:1580px;top:619px" width="18" height="18"><path d="M9.5 2.5 Q10.3 2.5 10.8 3.4 L16.6 14.4 Q17.2 16 15.6 16 L3.4 16 Q1.8 16 2.4 14.4 L8.2 3.4 Q8.7 2.5 9.5 2.5 Z" fill="#2a947a"/><rect x="8.6" y="6.5" width="1.9" height="5.3" fill="#fff"/><rect x="8.6" y="13" width="1.9" height="1.8" fill="#fff"/><svg x="0" y="0" width="8" height="8.5" viewBox="-0.5 -0.5 12.5 12.5"><path d="M6 -0.2 L12 12 L0 12 Z" fill="#2a947a" opacity="0"/><path d="M6 1.2 Q6.8 1.2 7.3 2.2 L11 9.6 Q11.7 11.4 10 11.4 L2 11.4 Q0.3 11.4 1 9.6 L4.7 2.2 Q5.2 1.2 6 1.2 Z" fill="#fde38a" stroke="#e0a030" stroke-width="1.1"/><rect x="5.4" y="3.8" width="1.3" height="3.6" fill="#4a2a08"/><rect x="5.4" y="8.4" width="1.3" height="1.3" fill="#6a4a18"/></svg></svg>

<div class="sec" style="top:658px;height:113px"></div>
<div class="gchev" style="left:1382px;top:665px"></div>
<div class="t b" style="left:1406px;top:666px;font-size:14.8px">Other tools</div>
<div class="a" style="left:1384px;top:688px;width:90px;height:83px;background:#dedede;border:1px solid #a8a8a8;border-bottom:none;overflow:hidden">
 <svg class="a" style="left:2px;top:2px" width="84" height="82">
  <circle cx="42" cy="41" r="37.3" fill="#fff" stroke="#2a947a" stroke-width="5"/>
  <rect x="25.5" y="25.5" width="31" height="31" rx="3" fill="#2a947a"/><rect x="27.5" y="27.5" width="27" height="27" rx="1.5" fill="#fff"/><rect x="29" y="29" width="24" height="24" fill="#2a947a"/>
  <g stroke="#2a947a" stroke-width="1.6"><path d="M30 18v7M34.4 18v7M38.8 18v7M43.2 18v7M47.6 18v7M52 18v7M30 57v7M34.4 57v7M38.8 57v7M43.2 57v7M47.6 57v7M52 57v7M18 31h7M18 35h7M18 39h7M18 43h7M18 47h7M18 51h7M57 31h7M57 35h7M57 39h7M57 43h7M57 47h7M57 51h7"/></g>
 </svg>
</div>
<div class="a" style="left:1489px;top:688px;width:90px;height:83px;background:#dedede;border:1px solid #a8a8a8;border-bottom:none;overflow:hidden">
 <svg class="a" style="left:2px;top:2px" width="84" height="82">
  <circle cx="42" cy="41" r="37.3" fill="#fff" stroke="#2a947a" stroke-width="5"/>
  <path d="M21 46 L21 29.5 L33 29.5 L33 55.5 L46.3 55.5 L46.3 29.5 L60 29.5 L60 58" fill="none" stroke="#2a947a" stroke-width="5.8" stroke-linejoin="miter"/>
 </svg>
</div>
<div class="a" style="left:1594px;top:688px;width:90px;height:83px;background:#c8c8c8;border:1px solid #bdbdbd;border-bottom:none;overflow:hidden">
 <svg class="a" style="left:2px;top:2px" width="84" height="82">
  <circle cx="42" cy="41" r="38" fill="#dadada" stroke="#bebebe" stroke-width="3"/>
  <rect x="18" y="16.6" width="48" height="48.4" rx="5" fill="#b9b9b9"/>
  <g font-size="18" font-family="Liberation Sans" font-weight="bold" fill="#e2e2e2">
  <text x="21.5" y="31" textLength="42" lengthAdjust="spacingAndGlyphs">1001</text>
  <text x="21.5" y="46" textLength="42" lengthAdjust="spacingAndGlyphs">1010</text>
  <text x="21.5" y="61" textLength="42" lengthAdjust="spacingAndGlyphs">0101</text></g>
 </svg>
</div>
<!-- PROBLEMS -->
<div class="a" style="left:1361px;top:777px;width:558px;height:29px;background:linear-gradient(#ececec,#e2e2e2);border-bottom:1px solid #d6d6d6"></div>
<div class="a" style="left:1361px;top:777px;width:113px;height:29px;background:#f0f0f0;border-right:1px solid #d6d6d6"></div>
<svg class="a" style="left:1364px;top:783px" width="18" height="18"><path d="M9.5 2.5 Q10.3 2.5 10.8 3.4 L16.6 14.4 Q17.2 16 15.6 16 L3.4 16 Q1.8 16 2.4 14.4 L8.2 3.4 Q8.7 2.5 9.5 2.5 Z" fill="#2a947a"/><rect x="8.6" y="6.5" width="1.9" height="5.3" fill="#fff"/><rect x="8.6" y="13" width="1.9" height="1.8" fill="#fff"/><svg x="0" y="0" width="8" height="8.5" viewBox="-0.5 -0.5 12.5 12.5"><path d="M6 -0.2 L12 12 L0 12 Z" fill="#2a947a" opacity="0"/><path d="M6 1.2 Q6.8 1.2 7.3 2.2 L11 9.6 Q11.7 11.4 10 11.4 L2 11.4 Q0.3 11.4 1 9.6 L4.7 2.2 Q5.2 1.2 6 1.2 Z" fill="#fde38a" stroke="#e0a030" stroke-width="1.1"/><rect x="5.4" y="3.8" width="1.3" height="3.6" fill="#4a2a08"/><rect x="5.4" y="8.4" width="1.3" height="1.3" fill="#6a4a18"/></svg></svg>
<div class="t" style="left:1385px;top:786px">Problems</div>
<svg class="a" style="left:1454px;top:786px" width="12" height="12"><path d="M1 1L10.2 10.2M10.2 1L1 10.2" stroke="#222" stroke-width="0.9"/></svg>
<div class="t b" style="left:1829px;top:782px;color:#2a947a;font-size:16px">B</div>
<div class="a" style="left:1847px;top:778px;width:23px;height:22px;background:#cce4f7;border:1px solid #99c9ef"></div>
<svg class="a" style="left:1850px;top:781px" width="17" height="16"><path d="M1.5 1.5 L15.5 1.5 L10 8 L10 14.5 L7 14.5 L7 8 Z" fill="none" stroke="#2a947a" stroke-width="2.2" stroke-linejoin="round"/></svg>
<div class="a" style="left:1876px;top:784px;width:10px;height:4px;border:1.3px solid #222"></div>
<div class="a" style="left:1898px;top:784px;width:11px;height:10px;border:1px solid #222;border-top-width:2px"></div>

<div class="a" style="left:1366px;top:811px;width:548px;height:26px;border:1px solid #7a7a7a;background:#fff"></div>
<div class="t" style="left:1373px;top:818px;color:#777">type filter text</div>

<div class="a" style="left:1366px;top:842px;width:528px;height:135px;background:#fff"></div>
<div class="a" style="left:1465px;top:842px;width:1px;height:135px;background:#e5e5e5"></div>
<div class="a" style="left:1556px;top:842px;width:1px;height:135px;background:#e5e5e5"></div>
<div class="t" style="left:1372px;top:849px">Level</div>
<svg class="a" style="left:1410px;top:843px" width="10" height="6"><path d="M1 1 L5 4.5 L9 1" fill="none" stroke="#999" stroke-width="1"/></svg>
<div class="t" style="left:1472px;top:849px">Resource</div>
<div class="t" style="left:1563px;top:849px">Issue</div>
<div class="a" style="left:1366px;top:868px;width:99px;height:109px;background:#f4f4f4"></div>
<div class="a" style="left:1366px;top:868px;width:99px;height:22px;background:#efefef"></div>
<div class="a" style="left:1366px;top:890px;width:527px;height:1px;background:#dedede"></div>
<svg class="a" style="left:1390px;top:872px" width="13.5" height="13.5" viewBox="0 0 16 16"><circle cx="6" cy="6" r="4.2" fill="#fbe59a" stroke="#e0b040" stroke-width="1"/><rect x="3.5" y="10" width="5" height="3.5" rx="1" fill="#c8c8d0" stroke="#8a8a9a" stroke-width="0.6"/><path d="M11 7 L15 14.5 L7 14.5 Z" fill="#f7d070" stroke="#c08a20" stroke-width="0.8" stroke-linejoin="round"/><rect x="10.6" y="9.3" width="0.9" height="3" fill="#333"/></svg>
<div class="t" style="left:1410px;top:873px">Warning</div>
<div class="t cx" style="left:1471px;top:873px">FLEXIO1.fle...</div>
<div class="t" style="left:1562px;top:873px">Signal IO, channel 15 is not routed.</div>
<div class="a" style="left:1366px;top:913px;width:527px;height:1px;background:#dedede"></div>
<svg class="a" style="left:1390px;top:895px" width="13.5" height="13.5" viewBox="0 0 16 16"><circle cx="6" cy="6" r="4.2" fill="#fbe59a" stroke="#e0b040" stroke-width="1"/><rect x="3.5" y="10" width="5" height="3.5" rx="1" fill="#c8c8d0" stroke="#8a8a9a" stroke-width="0.6"/><path d="M11 7 L15 14.5 L7 14.5 Z" fill="#f7d070" stroke="#c08a20" stroke-width="0.8" stroke-linejoin="round"/><rect x="10.6" y="9.3" width="0.9" height="3" fill="#333"/></svg>
<div class="t" style="left:1410px;top:896px">Warning</div>
<div class="t cx" style="left:1471px;top:896px">LPUART1</div>
<div class="t" style="left:1562px;top:896px">Peripheral LPUART1 is not initialized</div>
<div class="a" style="left:1366px;top:936px;width:527px;height:1px;background:#dedede"></div>
<svg class="a" style="left:1390px;top:918px" width="13.5" height="13.5" viewBox="0 0 16 16"><circle cx="6" cy="6" r="4.2" fill="#fbe59a" stroke="#e0b040" stroke-width="1"/><rect x="3.5" y="10" width="5" height="3.5" rx="1" fill="#c8c8d0" stroke="#8a8a9a" stroke-width="0.6"/><path d="M11 7 L15 14.5 L7 14.5 Z" fill="#f7d070" stroke="#c08a20" stroke-width="0.8" stroke-linejoin="round"/><rect x="10.6" y="9.3" width="0.9" height="3" fill="#333"/></svg>
<div class="t" style="left:1410px;top:919px">Warning</div>
<div class="t cx" style="left:1471px;top:919px">SEMC</div>
<div class="t" style="left:1562px;top:919px">Peripheral SEMC is not initialized</div>
<div class="a" style="left:1366px;top:959px;width:527px;height:1px;background:#dedede"></div>
<svg class="a" style="left:1390px;top:941px" width="13.5" height="13.5" viewBox="0 0 16 16"><circle cx="6" cy="6" r="4.2" fill="#fbe59a" stroke="#e0b040" stroke-width="1"/><rect x="3.5" y="10" width="5" height="3.5" rx="1" fill="#c8c8d0" stroke="#8a8a9a" stroke-width="0.6"/><path d="M11 7 L15 14.5 L7 14.5 Z" fill="#f7d070" stroke="#c08a20" stroke-width="0.8" stroke-linejoin="round"/><rect x="10.6" y="9.3" width="0.9" height="3" fill="#333"/></svg>
<div class="t" style="left:1410px;top:942px">Warning</div>
<div class="t cx" style="left:1471px;top:942px">CSI</div>
<div class="t" style="left:1562px;top:942px">Peripheral CSI is not initialized</div>
<div class="a" style="left:1366px;top:982px;width:527px;height:1px;background:#dedede"></div>
<svg class="a" style="left:1390px;top:964px" width="13.5" height="13.5" viewBox="0 0 16 16"><circle cx="6" cy="6" r="4.2" fill="#fbe59a" stroke="#e0b040" stroke-width="1"/><rect x="3.5" y="10" width="5" height="3.5" rx="1" fill="#c8c8d0" stroke="#8a8a9a" stroke-width="0.6"/><path d="M11 7 L15 14.5 L7 14.5 Z" fill="#f7d070" stroke="#c08a20" stroke-width="0.8" stroke-linejoin="round"/><rect x="10.6" y="9.3" width="0.9" height="3" fill="#333"/></svg>
<div class="t" style="left:1410px;top:965px">Warning</div>
<div class="t cx" style="left:1471px;top:965px">LPI2C1</div>
<div class="t" style="left:1562px;top:965px">Peripheral LPI2C1 is not initialized</div>

<div class="a" style="left:1366px;top:977px;width:548px;height:25px;background:#f0f0f0"></div>
<div class="a" style="left:1894px;top:842px;width:19px;height:135px;background:#f0f0f0"></div>
<div class="chev" style="left:1900px;top:851px;width:7px;height:7px;border-width:1.8px;transform:rotate(225deg);border-color:#555"></div>
<div class="a" style="left:1894px;top:863px;width:19px;height:41px;background:#cdcdcd"></div>
<div class="chev" style="left:1900px;top:962px;width:7px;height:7px;border-width:1.8px;border-color:#555"></div>
<div class="a" style="left:1387px;top:979px;width:218px;height:18px;background:#cdcdcd"></div>
<div class="chev" style="left:1375px;top:984px;width:7px;height:7px;border-width:1.8px;transform:rotate(135deg);border-color:#555"></div>
<div class="chev" style="left:1878px;top:984px;width:7px;height:7px;border-width:1.8px;transform:rotate(-45deg);border-color:#555"></div>

<!--CONTENT-->

</body></html>
